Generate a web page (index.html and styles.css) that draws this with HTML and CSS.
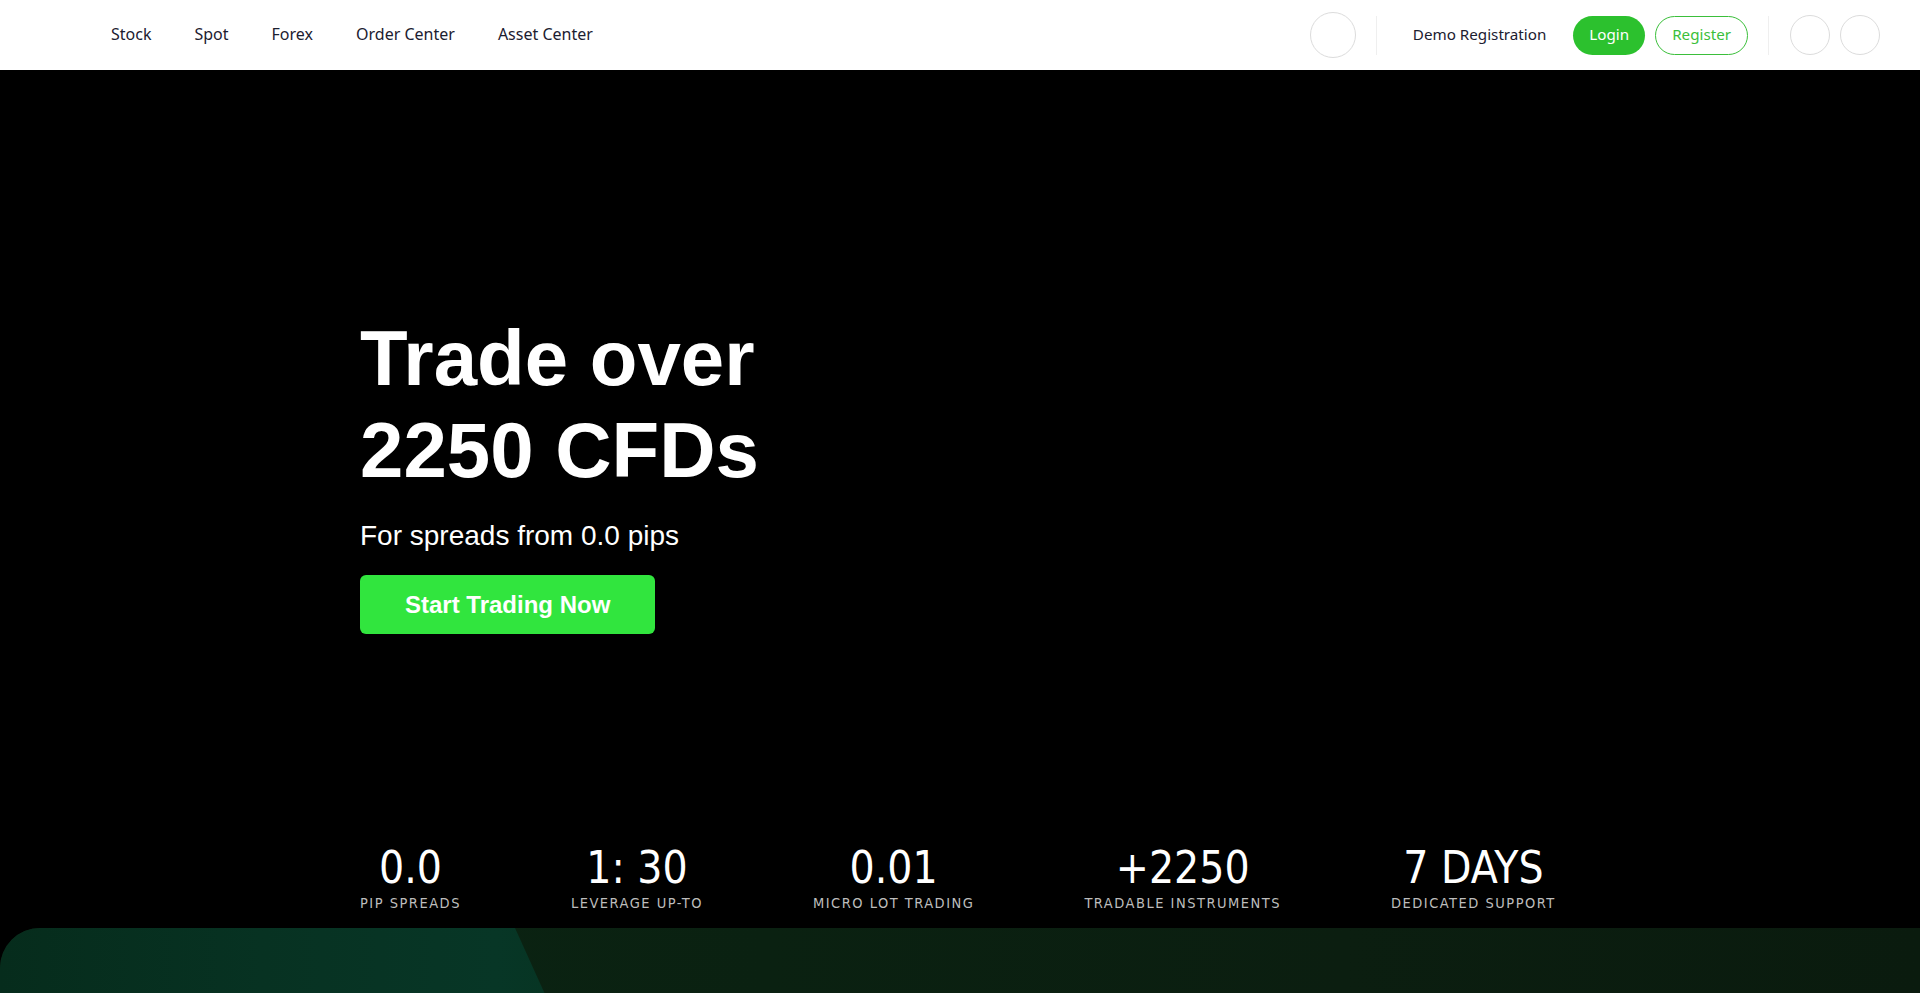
FILE: index.html
```html
<!DOCTYPE html>
<html lang="en">
<head>
    <meta charset="UTF-8">
    <meta name="viewport" content="width=device-width, initial-scale=1.0">
    <title>Trade over 2250 CFDs</title>
    <link rel="stylesheet" href="styles.css">
</head>
<body>

    <!-- Header -->
    <header class="topbar">
        <nav class="main-nav">
            <a href="#">Stock</a>
            <a href="#">Spot</a>
            <a href="#">Forex</a>
            <a href="#">Order Center</a>
            <a href="#">Asset Center</a>
        </nav>
        <div class="top-actions">
            <span class="round-btn round-lg"></span>
            <span class="divider divider-left"></span>
            <a href="#" class="demo-link">Demo Registration</a>
            <a href="#" class="pill pill-solid">Login</a>
            <a href="#" class="pill pill-outline">Register</a>
            <span class="divider divider-right"></span>
            <span class="round-btn"></span>
            <span class="round-btn"></span>
        </div>
    </header>

    <!-- Hero -->
    <section class="hero">
        <div class="container">
            <h1>Trade over<br>2250 CFDs</h1>
            <p class="hero-sub">For spreads from 0.0 pips</p>
            <a href="#" class="cta">Start Trading Now</a>

            <div class="stats">
                <div class="stat">
                    <div class="stat-num">0.0</div>
                    <div class="stat-label">Pip spreads</div>
                </div>
                <div class="stat">
                    <div class="stat-num">1: 30</div>
                    <div class="stat-label">Leverage up-to</div>
                </div>
                <div class="stat">
                    <div class="stat-num">0.01</div>
                    <div class="stat-label">Micro lot trading</div>
                </div>
                <div class="stat">
                    <div class="stat-num">+2250</div>
                    <div class="stat-label">Tradable instruments</div>
                </div>
                <div class="stat">
                    <div class="stat-num">7 DAYS</div>
                    <div class="stat-label">Dedicated support</div>
                </div>
            </div>
        </div>
    </section>

    <!-- Next block -->
    <section class="band"></section>

</body>
</html>
```

FILE: styles.css
```css
/* General */
body {
    margin: 0;
    padding: 0;
    background-color: #000;
    font-family: "Noto Sans", Arial, sans-serif;
}

a {
    text-decoration: none;
}

/* Header */
.topbar {
    height: 70px;
    box-sizing: border-box;
    background-color: #fff;
    display: flex;
    align-items: center;
    justify-content: space-between;
    padding: 0 40px 0 111px;
}

.main-nav {
    display: flex;
    gap: 43px;
    margin-top: -2px;
}

.main-nav a {
    color: #1c2030;
    font-size: 16px;
}

.top-actions {
    display: flex;
    align-items: center;
}

.round-btn {
    width: 38px;
    height: 38px;
    border: 1px solid #dcdcdc;
    border-radius: 50%;
    margin-left: 10px;
}

.round-btn.round-lg {
    width: 44px;
    height: 44px;
    margin-left: 0;
}

.divider {
    width: 1px;
    height: 39px;
    background-color: #efefef;
    margin-left: 20px;
}

.divider-left {
    margin-right: 36px;
}

.divider-right {
    margin-right: 11px;
}

.demo-link {
    color: #1c2030;
    font-size: 15.2px;
    margin-right: 27px;
    margin-top: -2px;
}

.pill {
    height: 39px;
    box-sizing: border-box;
    display: flex;
    align-items: center;
    border-radius: 20px;
    font-size: 15.2px;
    padding-bottom: 2px;
}

.pill-solid {
    background-color: #2cc12e;
    color: #fff;
    padding-left: 16px;
    padding-right: 16px;
    margin-right: 10px;
}

.pill-outline {
    border: 1px solid #3bbf3b;
    color: #3bbf3b;
    padding-left: 16px;
    padding-right: 16px;
}

/* Hero */
.hero {
    background-color: #000;
    color: #fff;
    font-family: "Liberation Sans", Arial, sans-serif;
}

.container {
    width: 1200px;
    margin: 0 auto;
    padding-top: 242px;
    padding-bottom: 16px;
}

.hero h1 {
    margin: 0;
    font-size: 78px;
    line-height: 92px;
    font-weight: bold;
}

.hero-sub {
    margin: 23px 0 22px;
    font-size: 28px;
    line-height: 34px;
}

.cta {
    display: inline-block;
    background-color: #31e53e;
    color: #fff;
    font-size: 24px;
    font-weight: bold;
    line-height: 27px;
    padding: 16px 45px;
    border-radius: 6px;
}

/* Stats */
.stats {
    display: flex;
    gap: 110px;
    margin-top: 211px;
    font-family: "DejaVu Sans Condensed", "Liberation Sans", sans-serif;
    font-stretch: condensed;
}

.stat {
    display: flex;
    flex-direction: column;
    align-items: center;
    white-space: nowrap;
}

.stat-num {
    font-size: 44px;
    line-height: 46px;
}

.stat-label {
    margin-top: 3px;
    font-size: 14.5px;
    line-height: 18px;
    letter-spacing: 1.5px;
    text-transform: uppercase;
    color: #bdbdbd;
}

/* Band */
.band {
    position: relative;
    height: 300px;
    border-top-left-radius: 40px;
    overflow: hidden;
    background: linear-gradient(90deg, #0b2413 0%, #0a2111 40%, #0b1e10 70%, #0a1b0e 100%);
}

.band::before {
    content: "";
    position: absolute;
    left: 0;
    top: 0;
    width: 660px;
    height: 100%;
    background: linear-gradient(90deg, #062c1c 0%, #073222 40%, #073626 75%, #06331f 100%);
    clip-path: polygon(0 0, 515px 0, 651px 100%, 0 100%);
}
```
